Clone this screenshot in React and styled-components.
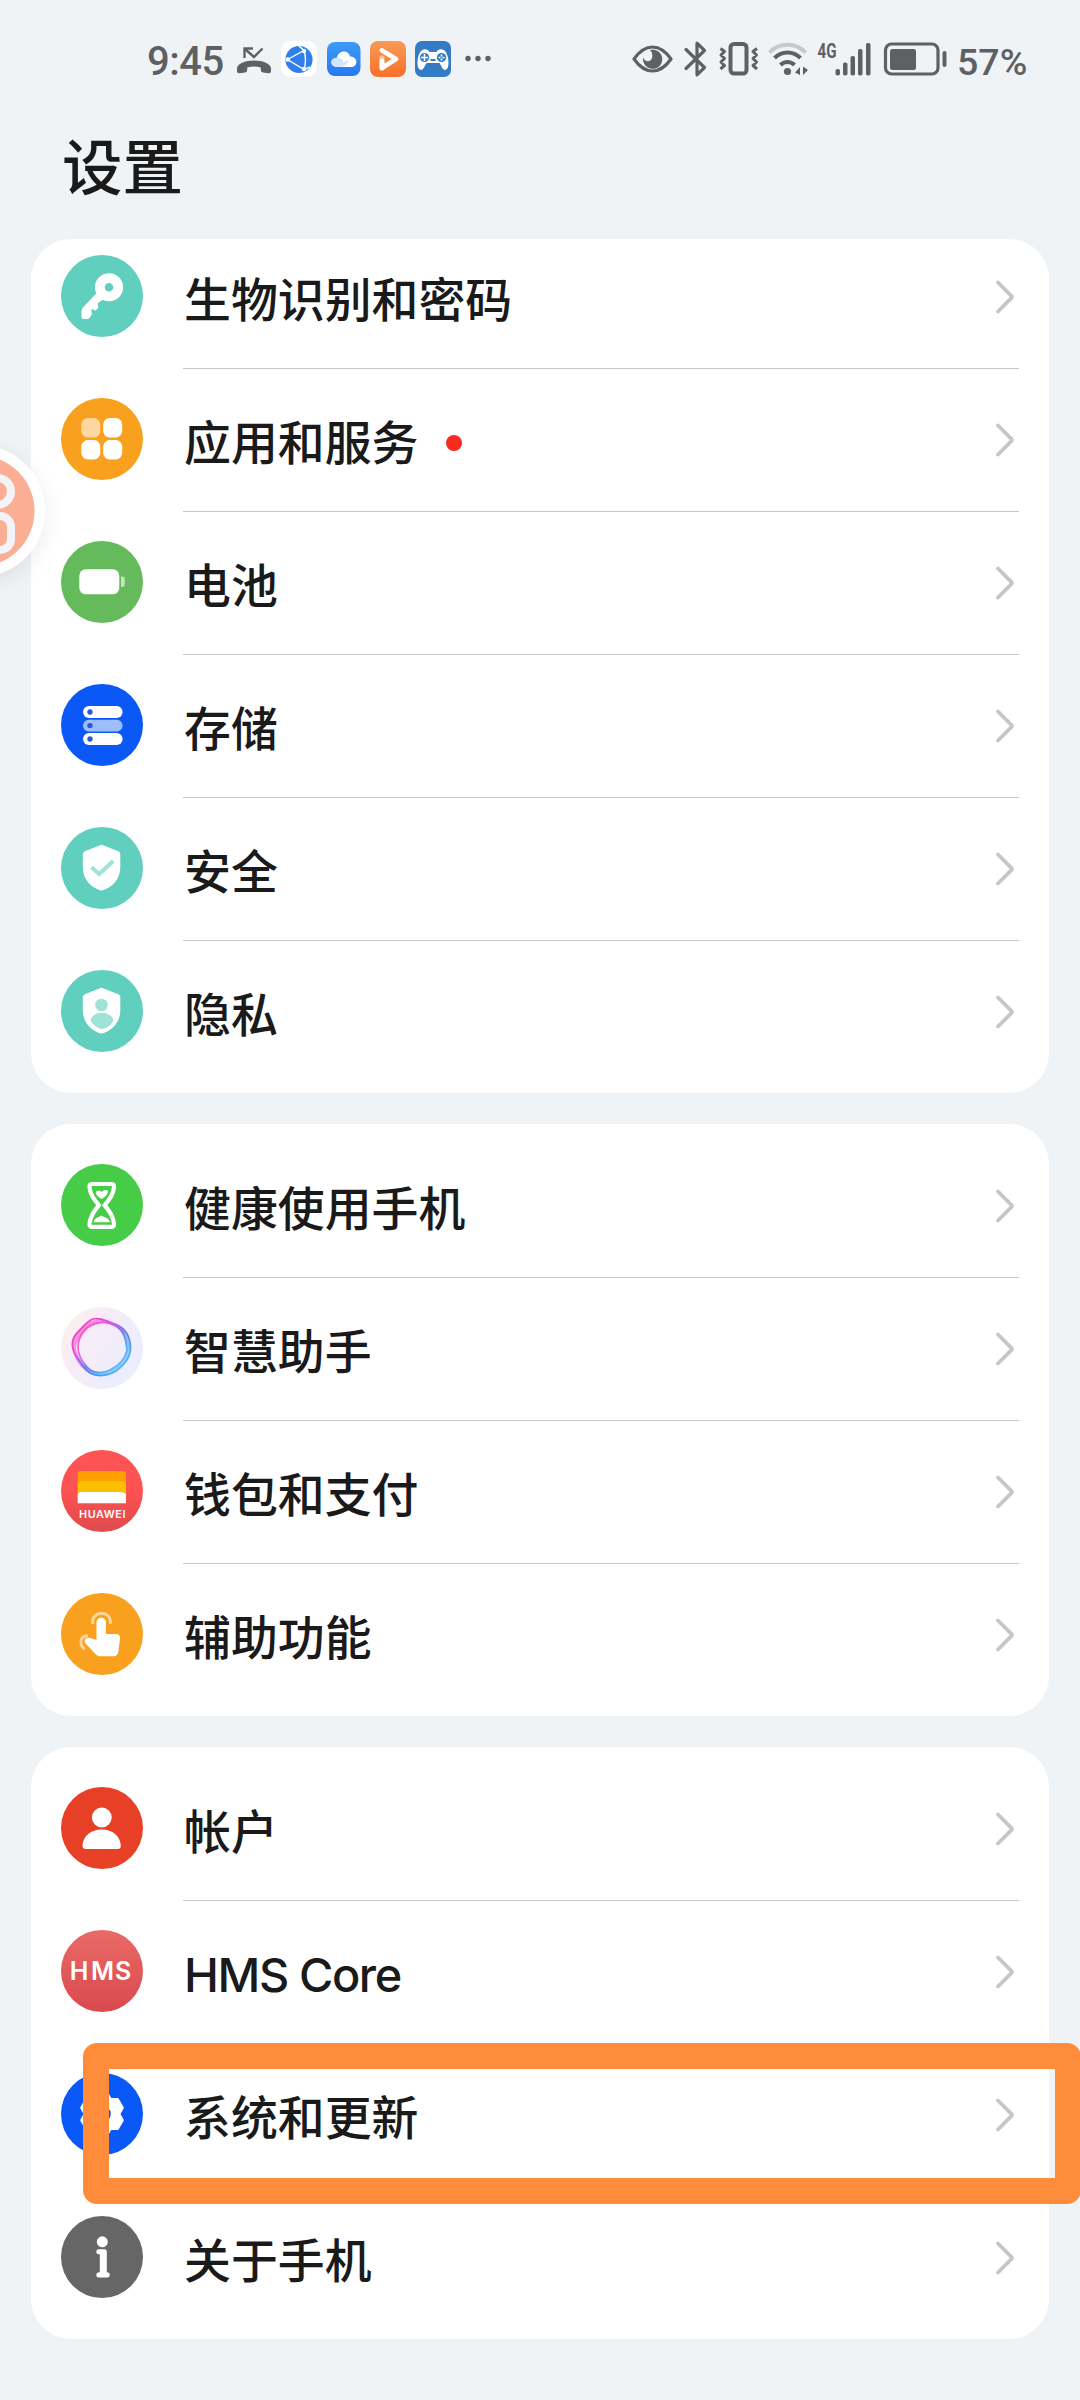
import styled, { createGlobalStyle } from 'styled-components';

const GlobalStyle = createGlobalStyle`
  body {
    margin: 0;
    background: #f0f3f6;
  }
`;

const Page = styled.div`
  position: relative;
  width: 1080px;
  height: 2400px;
  overflow: hidden;
  background: #f0f3f6;
  color: #1a1a1a;
  font-family: Inter, "Noto Sans CJK SC", sans-serif;
`;

const StatusBar = styled.div`
  display: flex;
  align-items: center;
  height: 118px;
  padding: 0 54px 0 147px;
  box-sizing: border-box;
  color: #5e6163;
`;

const StatusItem = styled.div`
  flex: none;
  display: flex;
  width: ${(p) => p.$width}px;
  margin-left: ${(p) => p.$gap}px;

  svg {
    display: block;
    overflow: visible;
  }
`;

const StatusText = styled.span`
  flex: none;
  width: ${(p) => p.$width}px;
  margin-left: ${(p) => p.$gap || 0}px;
  padding-top: ${(p) => p.$drop}px;
  font-family: Roboto, sans-serif;
  font-size: ${(p) => p.$size}px;
  font-weight: 500;
  line-height: 44px;
  letter-spacing: ${(p) => p.$spacing || 0}px;
  white-space: nowrap;
`;

const Header = styled.h1`
  display: flex;
  align-items: center;
  height: 121px;
  margin: 0;
  padding: 0 0 30px 62px;
  box-sizing: border-box;
  font-size: 60.5px;
  font-weight: 500;
`;

const CardList = styled.div`
  display: flex;
  flex-direction: column;
  gap: 31px;
  padding: 0 31px;
`;

const Card = styled.section`
  padding: ${(p) => (p.$scrolled ? '0' : '11px')} 0 9px;
  border-radius: 40px;
  overflow: hidden;
  background: #fff;
`;

const Rows = styled.div`
  margin-top: ${(p) => (p.$scrolled ? '-13px' : '0')};
`;

const Row = styled.div`
  display: flex;
  height: 143px;
  padding-left: 30px;
`;

const RowIcon = styled.svg`
  flex: none;
  width: 82px;
  height: 82px;
  margin-top: 29px;
`;

const RowBody = styled.div`
  flex: 1;
  display: flex;
  align-items: center;
  justify-content: space-between;
  margin: 0 30px 0 40px;
  padding: 0 4px 1px 0;
  border-bottom: 1px solid ${(p) => (p.$last ? 'transparent' : '#c4c7c9')};
`;

const Label = styled.span`
  display: flex;
  align-items: center;
  padding: 7px 0 0 1px;
  font-size: 46.9px;
  font-weight: 500;
  line-height: 60px;
  letter-spacing: ${(p) => (p.$latin ? '-1.4px' : '0')};
`;

const RedDot = styled.span`
  width: 16px;
  height: 16px;
  margin-left: 28px;
  border-radius: 50%;
  background: #fa2a1e;
`;

const Highlight = styled.div`
  position: absolute;
  left: 83px;
  top: 2043px;
  width: 998px;
  height: 161px;
  box-sizing: border-box;
  border: 26px solid #ff8c3a;
  border-radius: 14px;
`;

const FloatBall = styled.div`
  position: absolute;
  left: -87px;
  top: 445px;
  width: 132px;
  height: 132px;
  border-radius: 50%;
  background: rgba(255, 255, 255, 0.88);
  box-shadow: 0 6px 22px rgba(0, 0, 0, 0.08);

  svg {
    display: block;
  }
`;

const Chevron = () => (
  <svg width="20" height="36" viewBox="0 0 20 36" fill="none">
    <path d="M3 3.5L16.3 16.8Q17.5 18 16.3 19.2L3 32.5" stroke="#c6c6c6" strokeWidth="3.8" strokeLinecap="round" />
  </svg>
);

const SHIELD = 'M39 18.2Q40.5 17.4 42 18.2L57.3 24.2Q59.3 25 59.3 27.3V40C59.3 52 51.5 60.3 42 63.2Q40.5 63.7 39 63.2C29.5 60.3 21.8 52 21.8 40V27.3Q21.8 25 23.8 24.2Z';

// six rounded teeth, notches on the horizontal axis
const gearPoints = Array.from({ length: 6 }, (_, i) => {
  const at = (deg, r) => {
    const a = (deg * Math.PI) / 180;
    return `${(41 + r * Math.cos(a)).toFixed(2)},${(41 + r * Math.sin(a)).toFixed(2)}`;
  };
  const base = i * 60;
  return [at(base, 16.8), at(base + 17, 21.2), at(base + 43, 21.2)].join(' ');
}).join(' ');

const icons = {
  key: (
    <>
      <circle cx="41" cy="41" r="41" fill="#61cfbe" />
      <path d="M37 36.5L22 52.5Q20.5 54 20.5 56V62Q20.5 64 22.5 64H26Q27.7 64 28.7 62.5L30.500 60Q31.500 58.500 30.500 57Q29.800 55.500 30.800 54.500L31.500 53.800L33.300 55.500Q36 55 37.500 52.500Q36.300 50 37 48L42 44.500Z" fill="#fff" />
      <circle cx="48" cy="32.3" r="9.2" fill="none" stroke="#fff" strokeWidth="9.800" />
    </>
  ),
  apps: (
    <>
      <circle cx="41" cy="41" r="41" fill="#f9a01f" />
      <rect x="20.3" y="20" width="19" height="19.5" rx="6.5" fill="#fcd8a0" />
      <rect x="42.2" y="20" width="19" height="19.5" rx="6.5" fill="#fff" />
      <rect x="20.3" y="42" width="19" height="19.5" rx="6.5" fill="#fff" />
      <rect x="42.2" y="42" width="19" height="19.5" rx="6.5" fill="#fff" />
    </>
  ),
  battery: (
    <>
      <circle cx="41" cy="41" r="41" fill="#65bb5c" />
      <rect x="18.3" y="28.3" width="40" height="25" rx="6.5" fill="#fff" />
      <path d="M60 35.500H61Q63.800 35.500 63.800 38V43.500Q63.800 46 61 46H60Z" fill="#c3e4be" />
    </>
  ),
  storage: (
    <>
      <circle cx="41" cy="41" r="41" fill="#0a59f7" />
      <rect x="22" y="22" width="39.6" height="12" rx="6" fill="#fff" />
      <rect x="22" y="35.8" width="39.6" height="11.6" rx="5.8" fill="#9dbdfc" />
      <rect x="22" y="49" width="39.6" height="12" rx="6" fill="#fff" />
      <circle cx="29" cy="28" r="2.7" fill="#2a55dc" />
      <circle cx="29" cy="41.6" r="2.7" fill="#2a55dc" />
      <circle cx="29" cy="55" r="2.7" fill="#2a55dc" />
    </>
  ),
  security: (
    <>
      <circle cx="41" cy="41" r="41" fill="#61cfbe" />
      <path d={SHIELD} fill="#fff" />
      <path d="M30.5 40.2L38.2 47L52.2 34" fill="none" stroke="#a0e2d8" strokeWidth="4" />
    </>
  ),
  privacy: (
    <>
      <circle cx="41" cy="41" r="41" fill="#61cfbe" />
      <path d={SHIELD} fill="#fff" />
      <circle cx="40.5" cy="35" r="6.3" fill="#a0e2d8" />
      <path d="M29.7 51C30 46 34.5 42.7 40.8 42.7S52 46 52.3 51C50 55 46 58 40.8 59.3C36 58 32 55 29.7 51Z" fill="#a0e2d8" />
    </>
  ),
  health: (
    <>
      <circle cx="41" cy="41" r="41" fill="#47cc47" />
      <path d="M30.5 20H51Q53.2 20 53 23C52.3 31 48.5 35 43.6 41.2C48.5 47.5 52.3 52 53 60Q53.2 62.8 51 62.8H30.5Q28.3 62.8 28.5 60C29.2 52 33 47.5 37.9 41.2C33 35 29.2 31 28.5 23Q28.3 20 30.5 20Z" fill="none" stroke="#fff" strokeWidth="4.2" />
      <path d="M40.8 35C37.5 33 34.5 30.5 34.8 28.2C35.5 26 39.5 26.5 40.8 28C42.5 25.5 46.5 25.3 47 27.5C47 30.5 43.5 33.5 40.8 35Z" fill="#fff" />
      <path d="M32.5 58.3C33.5 53.5 37 53.8 40.5 51.5C43.5 53.8 48 53.5 49 58.3Z" fill="#fff" />
    </>
  ),
  assistant: (
    <>
      <defs>
        <linearGradient id="orbBg" x1="0" y1="0.1" x2="1" y2="0.7">
          <stop offset="0" stopColor="#fdf0e8" />
          <stop offset="0.4" stopColor="#f6ecf8" />
          <stop offset="1" stopColor="#eaeefe" />
        </linearGradient>
        <linearGradient id="orbRing" x1="0.1" y1="0.15" x2="0.85" y2="0.9">
          <stop offset="0" stopColor="#f43fc0" />
          <stop offset="0.3" stopColor="#dd4fe8" />
          <stop offset="0.55" stopColor="#6f6fe8" />
          <stop offset="0.8" stopColor="#3fa0f5" />
          <stop offset="1" stopColor="#55b8fa" />
        </linearGradient>
      </defs>
      <circle cx="41" cy="41" r="41" fill="url(#orbBg)" />
      <g fill="none" stroke="url(#orbRing)">
        <path d="M32 12C40 10 47 15 56 18C65 22 69 31 69.500 40C70 50 63 58 55 64C47 69 36 70 29 66C23 61 18 54 14 47C10 39 10 32 17 25C23 19 26 14 32 12Z" strokeWidth="1.8" />
        <path d="M33 15C42 12 51 16 58 20C64 25 66 33 68 41C67 52 58 62 48 65C40 68 31 67 25 62C18 56 14 48 13 41C14 33 17 28 22 23C25 19 28 16 33 15Z" strokeWidth="3.6" opacity="0.55" />
        <path d="M37 16C46 14 54 17 60 23C65 29 65 36 66 43C64 53 57 59 49 63C40 67 32 66 27 61C20 54 17 47 17 40C17 32 20 27 25 22C29 18 32 17 37 16Z" strokeWidth="1.8" opacity="0.8" />
      </g>
    </>
  ),
  wallet: (
    <>
      <defs>
        <linearGradient id="walletBg" x1="0" y1="0" x2="0" y2="1">
          <stop offset="0" stopColor="#ff5455" />
          <stop offset="0.5" stopColor="#fd5152" />
          <stop offset="1" stopColor="#de4b4d" />
        </linearGradient>
      </defs>
      <circle cx="41" cy="41" r="41" fill="url(#walletBg)" />
      <path d="M16.7 24Q16.7 21 19.7 21H62Q65 21 65 24V42H16.7Z" fill="#ffa000" />
      <path d="M16.7 34Q16.7 31 19.7 31H62Q65 31 65 34V48H16.7Z" fill="#fcc000" />
      <path d="M16.7 45.5Q16.7 42 20.2 42H58Q63 42 65 44V53.3H16.7Z" fill="#fff" />
      <text x="18" y="68.2" fontSize="10.8" fontWeight="600" fill="#fff" textLength="46.5" fontFamily="Inter, sans-serif">HUAWEI</text>
    </>
  ),
  touch: (
    <>
      <circle cx="41" cy="41" r="41" fill="#f9a01f" />
      <path d="M31.8 31C30.5 25 34.5 20.6 40.5 20.6S50.5 25 49.2 31M27 42.8C19 42.5 17.5 52 23.8 56" fill="none" stroke="#fcd69b" strokeWidth="3" />
      <path d="M35.5 29.5C35.5 23 45 23 45 29.5V41H55C58 41 59.3 43 59 45.5L57.5 58C57 61.5 55.5 63.3 52.5 63.3H39.5C37.5 63.3 36 62.5 34.5 61L25 51C21.5 47 25.5 43.5 29.5 45L35.5 47Z" fill="#fff" />
    </>
  ),
  account: (
    <>
      <circle cx="41" cy="41" r="41" fill="#e84026" />
      <circle cx="40.8" cy="30.5" r="9.9" fill="#fff" />
      <path d="M21.5 58.5C22 49 30 42.5 40.8 42.5S59.2 49 59.8 58.5Q60 62 56.5 62H25Q21.3 62 21.5 58.5Z" fill="#fff" />
    </>
  ),
  hms: (
    <>
      <defs>
        <linearGradient id="hmsBg" x1="0" y1="0" x2="0" y2="1">
          <stop offset="0" stopColor="#e96a66" />
          <stop offset="1" stopColor="#d9494e" />
        </linearGradient>
      </defs>
      <circle cx="41" cy="41" r="41" fill="url(#hmsBg)" />
      <text x="8.7 30 54" y="50.2" fontSize="25" fontWeight="600" fill="#fff" fontFamily="Inter, sans-serif">HMS</text>
    </>
  ),
  gear: (
    <>
      <circle cx="41" cy="41" r="41" fill="#0a59f7" />
      <polygon points={gearPoints} fill="#fff" stroke="#fff" strokeWidth="3" strokeLinejoin="round" />
      <circle cx="41" cy="41" r="8.8" fill="#0a59f7" />
    </>
  ),
  info: (
    <>
      <circle cx="41" cy="41" r="41" fill="#666" />
      <circle cx="41.3" cy="25.8" r="5.5" fill="#fff" />
      <path d="M37.8 33.3H43.5Q45.8 33.3 45.8 35.6V56.3H46.5Q48.8 56.3 48.8 58.8T46.5 61.5H37.8Q35.3 61.5 35.3 59T37.8 56.3H38.8V38.3H37.8Q35.3 38.3 35.3 35.8T37.8 33.3Z" fill="#fff" />
    </>
  ),
};

const groups = [
  [
    { icon: 'key', label: '生物识别和密码' },
    { icon: 'apps', label: '应用和服务', dot: true },
    { icon: 'battery', label: '电池' },
    { icon: 'storage', label: '存储' },
    { icon: 'security', label: '安全' },
    { icon: 'privacy', label: '隐私' },
  ],
  [
    { icon: 'health', label: '健康使用手机' },
    { icon: 'assistant', label: '智慧助手' },
    { icon: 'wallet', label: '钱包和支付' },
    { icon: 'touch', label: '辅助功能' },
  ],
  [
    { icon: 'account', label: '帐户' },
    { icon: 'hms', label: 'HMS Core', latin: true },
    { icon: 'gear', label: '系统和更新' },
    { icon: 'info', label: '关于手机' },
  ],
];

const StatusIcons = () => (
  <StatusBar>
    <StatusText $size={40} $width={76} $drop={6} $spacing={-0.5}>9:45</StatusText>
    {/* missed call */}
    <StatusItem $width={36} $gap={13}>
      <svg width="36" height="36" viewBox="0 0 36 36" fill="none">
        <path d="M8.5 17V7.5H17M9 8L18 16L26.5 7.5" stroke="currentColor" strokeWidth="2.4" />
        <path d="M1 27.5C1 23 9 19.5 18 19.5S35 23 35 27.5V30Q35 32.5 32.5 32.2L27 31.5Q24.8 31 24.8 29V26.5Q18 24.5 11.2 26.5V29Q11.2 31 9 31.5L3.5 32.2Q1 32.5 1 30Z" fill="currentColor" />
      </svg>
    </StatusItem>
    {/* browser */}
    <StatusItem $width={36} $gap={9}>
      <svg width="36" height="36" viewBox="0 0 36 36">
        <rect width="36" height="36" rx="9" fill="#fff" />
        <circle cx="18" cy="18.5" r="13.6" fill="#2f80ed" />
        <path d="M6.5 18.5L23 9.5Q26 19 23 28.5ZM23 9.5L18 5M23 28.5L29 26" fill="none" stroke="#fff" strokeWidth="1.4" />
        <circle cx="6.8" cy="18.5" r="2.2" fill="#fff" />
        <circle cx="23" cy="10" r="2.2" fill="#fff" />
        <circle cx="23" cy="28" r="2.2" fill="#fff" />
      </svg>
    </StatusItem>
    {/* cloud */}
    <StatusItem $width={34} $gap={10}>
      <svg width="34" height="34" viewBox="0 0 34 34">
        <defs>
          <linearGradient id="cloudBg" x1="0" y1="0" x2="0" y2="1">
            <stop offset="0" stopColor="#3d9bf5" />
            <stop offset="1" stopColor="#2778f2" />
          </linearGradient>
        </defs>
        <rect width="33.5" height="34" rx="8" fill="url(#cloudBg)" />
        <path d="M10 25C2.5 25 2.5 15.5 10 15.8C11 7.5 22 7.5 23 14.5C31.5 14.5 31 25 24.5 25Z" fill="#fff" />
        <path d="M10 25C2.5 25 2.5 15.5 10 15.8C14 15 17 18 16 21Q19 18 22 18Q19 25 13 25Z" fill="#d3e5fc" />
      </svg>
    </StatusItem>
    {/* video */}
    <StatusItem $width={36} $gap={9}>
      <svg width="36" height="36" viewBox="0 0 36 36">
        <defs>
          <linearGradient id="videoBg" x1="0" y1="0" x2="0" y2="1">
            <stop offset="0" stopColor="#f79a55" />
            <stop offset="1" stopColor="#f9702a" />
          </linearGradient>
        </defs>
        <rect width="36" height="36" rx="8" fill="url(#videoBg)" />
        <path d="M12 27V17" stroke="#fbc7a0" strokeWidth="5" strokeLinecap="round" />
        <path d="M12 9.5L26 18L12 27V20" fill="none" stroke="#fff" strokeWidth="4.8" strokeLinecap="round" strokeLinejoin="round" />
      </svg>
    </StatusItem>
    {/* game centre */}
    <StatusItem $width={36} $gap={9}>
      <svg width="36" height="36" viewBox="0 0 36 36">
        <rect width="36" height="36" rx="7" fill="#337bc4" />
        <path d="M3 26C1.5 20 3.5 12 6.5 9.5C9.5 7.5 13 8 14.5 11H21.5C23 8 26.5 7.5 29.5 9.5C32.5 12 34.5 20 33 26C31.5 30 28.5 29.5 27 26.5L24.5 22H11.5L9 26.5C7.5 29.5 4.5 30 3 26Z" fill="#fff" />
        <circle cx="9.5" cy="16.5" r="4.6" fill="#337bc4" />
        <circle cx="26.5" cy="16.5" r="4.6" fill="#337bc4" />
        <path d="M9.5 13V20M6 16.5H13" stroke="#fff" strokeWidth="1.5" />
        <path d="M26.5 13.5V19.5M23.5 16.5H29.5" stroke="#fff" strokeWidth="1.7" strokeDasharray="2 2" />
        <path d="M15.5 19H20.5" stroke="#337bc4" strokeWidth="2" />
      </svg>
    </StatusItem>
    {/* more */}
    <StatusItem $width={26} $gap={14}>
      <svg width="26" height="8" viewBox="0 0 26 8" fill="currentColor">
        <circle cx="3" cy="3.5" r="2.7" />
        <circle cx="13" cy="3.5" r="2.7" />
        <circle cx="23" cy="3.5" r="2.7" />
      </svg>
    </StatusItem>
    {/* eye comfort */}
    <StatusItem $width={41} $gap={141}>
      <svg width="41" height="28" viewBox="0 0 41 28">
        <path d="M2 14C8 5.5 14 2 20.5 2S33 5.5 39 14C33 22.5 27 26 20.5 26S8 22.5 2 14Z" fill="none" stroke="currentColor" strokeWidth="3.2" strokeLinejoin="round" />
        <path d="M18 5A9.600 9.600 0 1 1 11.200 12.500C12.500 17.500 19.500 17.500 20.300 12C20.800 8.500 19.500 6.500 18 5Z" fill="currentColor" />
      </svg>
    </StatusItem>
    {/* bluetooth */}
    <StatusItem $width={24} $gap={11}>
      <svg width="24" height="36" viewBox="0 0 24 36" fill="none">
        <path d="M2 8.5L20.5 26.5L13 33.8V2.2L20.5 9.5L2 27.5" stroke="currentColor" strokeWidth="3.2" strokeLinejoin="round" strokeLinecap="round" />
      </svg>
    </StatusItem>
    {/* vibrate */}
    <StatusItem $width={40} $gap={11}>
      <svg width="40" height="34" viewBox="0 0 40 34" fill="none" stroke="currentColor">
        <rect x="11.5" y="2" width="16" height="29.5" rx="3.5" strokeWidth="4" />
        <path d="M1.5 6.5L5.5 9.5L2 13L5.5 16.5L2 20L5.5 23.5L1.5 27M38 6.500L34 9.500L37.500 13L34 16.500L37.500 20L34 23.500L38 27" strokeWidth="3" strokeLinejoin="round" />
      </svg>
    </StatusItem>
    {/* wifi */}
    <StatusItem $width={41} $gap={9}>
      <svg width="41" height="34" viewBox="0 0 41 34" fill="none" strokeWidth="4">
        <path d="M1.5 10.500C11 0 28 0 37.500 10.500" stroke="#c6c9cb" />
        <path d="M6.5 16C14 8.5 25 8.5 32.500 16" stroke="currentColor" />
        <path d="M12.5 23C16.500 19 22.500 19 26.500 23" stroke="currentColor" />
        <circle cx="19.5" cy="29.5" r="3.6" fill="currentColor" />
        <path d="M32 25V33L27 30.500ZM35 24.500L40 28L35 33Z" fill="currentColor" />
      </svg>
    </StatusItem>
    {/* mobile signal */}
    <StatusItem $width={54} $gap={8}>
      <svg width="54" height="34" viewBox="0 0 54 34" fill="currentColor">
        <text x="0.500" y="15.500" fontSize="20" fontWeight="700" fontFamily="Roboto, sans-serif" textLength="19" lengthAdjust="spacingAndGlyphs">4G</text>
        <rect x="18.500" y="27" width="4.500" height="6.500" rx="2" />
        <rect x="26" y="20.500" width="4.500" height="13" rx="1.800" />
        <rect x="33.500" y="14" width="4.500" height="19.500" rx="1.800" />
        <rect x="41" y="7" width="4.500" height="26.500" rx="1.800" />
        <rect x="49" y="1" width="4.500" height="32.500" rx="1.800" />
      </svg>
    </StatusItem>
    {/* battery */}
    <StatusItem $width={63} $gap={13}>
      <svg width="63" height="34" viewBox="0 0 63 34">
        <rect x="1.5" y="2" width="52.5" height="30" rx="6" fill="none" stroke="currentColor" strokeWidth="3.2" />
        <rect x="6" y="7" width="26" height="21" rx="2.5" fill="currentColor" />
        <rect x="58.5" y="9" width="4" height="16" rx="2" fill="currentColor" />
      </svg>
    </StatusItem>
    <StatusText $size={37.5} $width={68} $gap={10} $drop={5}>57%</StatusText>
  </StatusBar>
);

const SettingRow = ({ item, last }) => (
  <Row>
    <RowIcon viewBox="0 0 82 82">{icons[item.icon]}</RowIcon>
    <RowBody $last={last}>
      <Label $latin={item.latin}>
        {item.label}
        {item.dot && <RedDot />}
      </Label>
      <Chevron />
    </RowBody>
  </Row>
);

const App = () => {
  return (
    <Page>
      <GlobalStyle />
      <StatusIcons />
      <Header>设置</Header>
      <CardList>
        {groups.map((items, i) => (
          <Card key={items[0].icon} $scrolled={i === 0}>
            <Rows $scrolled={i === 0}>
              {items.map((item, j) => (
                <SettingRow key={item.icon} item={item} last={j === items.length - 1} />
              ))}
            </Rows>
          </Card>
        ))}
      </CardList>
      {/* assistive ball docked at the left edge */}
      <FloatBall>
        <svg width="132" height="132" viewBox="0 0 132 132">
          <circle cx="66" cy="66" r="55.5" fill="#faae94" />
          <g fill="none" stroke="#f3f4f7" strokeWidth="8">
            <circle cx="84.5" cy="46.5" r="13.5" />
            <rect x="69" y="71" width="29" height="34" rx="11" />
          </g>
        </svg>
      </FloatBall>
      <Highlight />
    </Page>
  );
};

export default App;
